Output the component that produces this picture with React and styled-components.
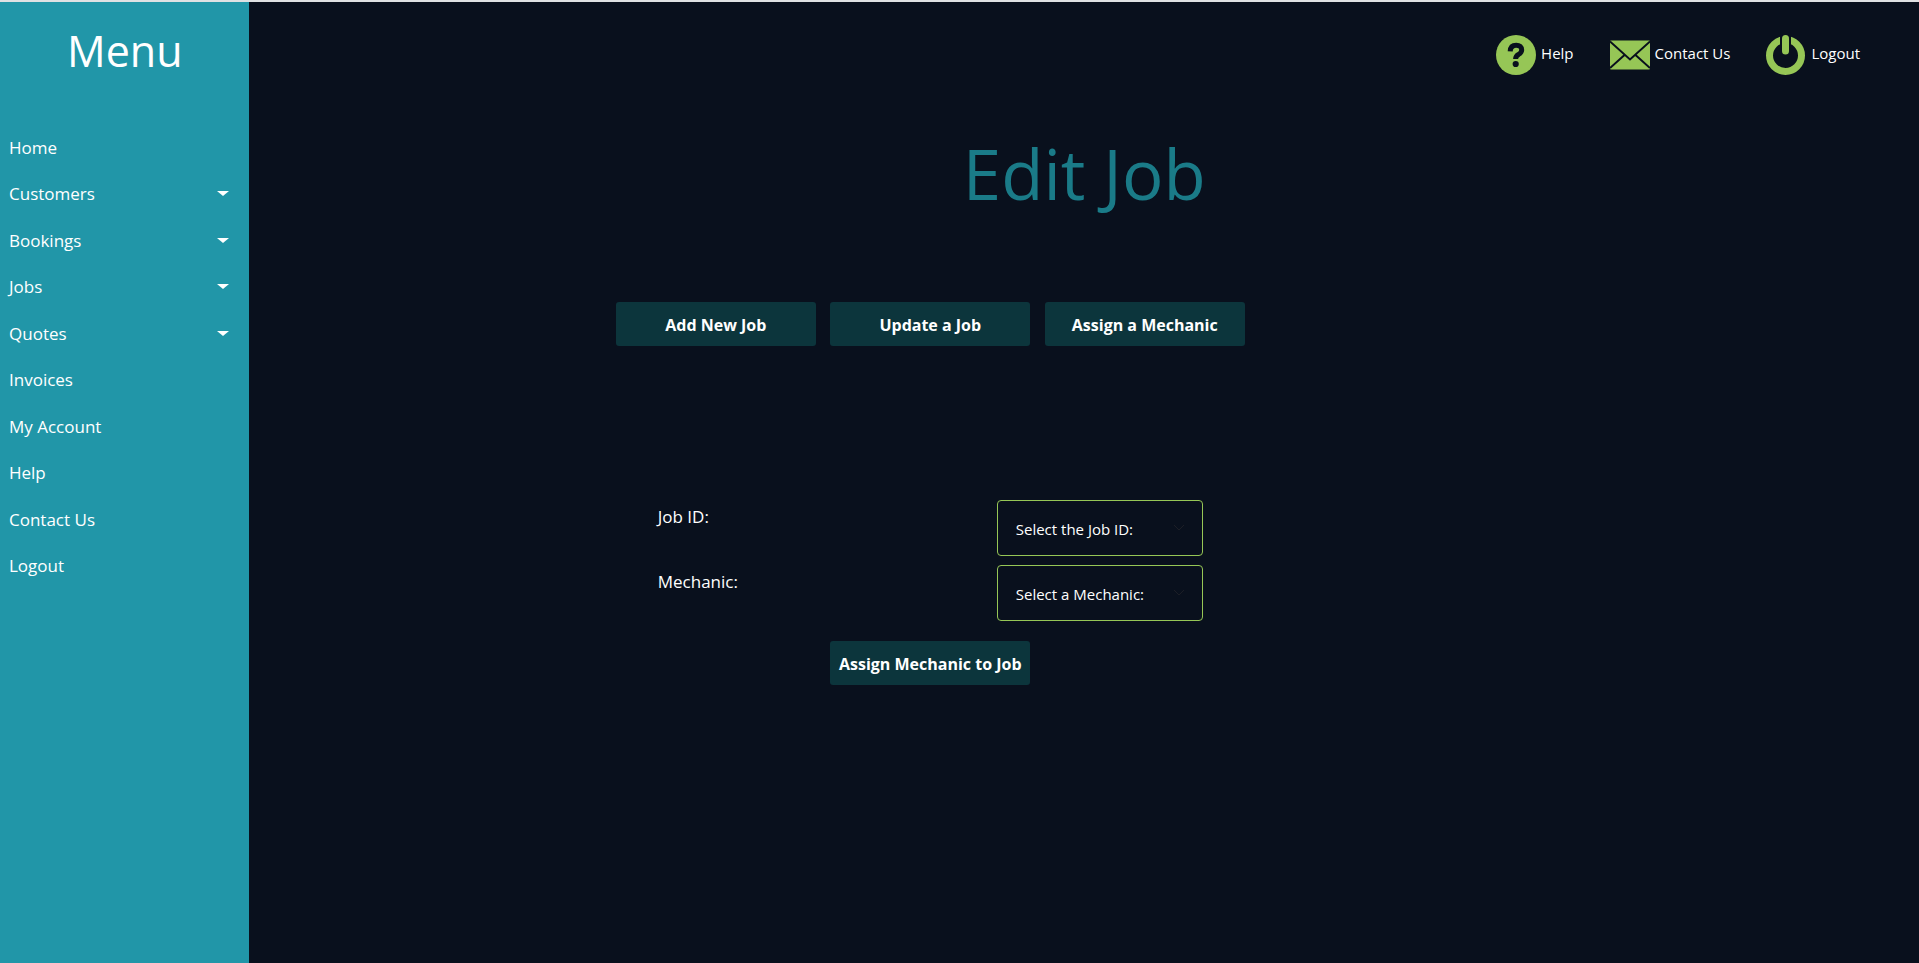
import React from "react";
import styled, { createGlobalStyle } from "styled-components";

const color = {
  page: "#09101d",
  sidebar: "#2196a8",
  title: "#1a7b88",
  button: "#0c353c",
  accent: "#96c656",
  text: "#ffffff",
};

const GlobalStyle = createGlobalStyle`
  *, *::before, *::after { box-sizing: border-box; }
  body {
    margin: 0;
    background: ${color.page};
    color: ${color.text};
    font-family: "Segoe UI", "Open Sans", "Noto Sans", sans-serif;
    font-size: 15px;
  }
  a { color: inherit; text-decoration: none; }
`;

const Page = styled.div`
  display: flex;
  min-height: 100vh;
  border-top: 2px solid #dfe1e3;
`;

const Sidebar = styled.aside`
  flex: none;
  width: 13%;
  background: ${color.sidebar};
`;

const MenuTitle = styled.h2`
  margin: 0;
  padding: 19px 0 20px;
  font-size: 43px;
  line-height: 60px;
  font-weight: 400;
  text-align: center;
`;

const MenuList = styled.ul`
  display: grid;
  grid-auto-rows: 1fr;
  height: 465px;
  margin: 23px 0 0;
  padding: 0;
  list-style: none;
`;

const MenuLink = styled.a`
  display: flex;
  align-items: center;
  justify-content: space-between;
  height: 100%;
  padding: 0 20px 0 9px;
  font-size: 17px;
`;

const Caret = styled.span`
  border: 6px solid transparent;
  border-top: 5px solid currentColor;
  border-bottom: 0;
`;

const Main = styled.main`
  flex: 1;
`;

const TopBar = styled.nav`
  display: flex;
  justify-content: flex-end;
  gap: 36px;
  padding: 33px 59px 0 0;
`;

const TopLink = styled.a`
  display: flex;
  align-items: flex-start;
  gap: 5px;
  line-height: 37px;

  svg { display: block; }
`;

const PageTitle = styled.h1`
  margin: 50px 0 0;
  font-size: 69px;
  line-height: 96px;
  font-weight: 400;
  text-align: center;
  color: ${color.title};
`;

const Workspace = styled.div`
  width: 629px;
  margin-left: calc(22% - 1px);
`;

const ButtonRow = styled.div`
  display: flex;
  justify-content: space-between;
  margin-top: 81px;
`;

const Button = styled.button`
  width: 200px;
  height: 44px;
  padding: 2px 0 0;
  border: 0;
  border-radius: 3px;
  background: ${color.button};
  color: inherit;
  font: inherit;
  font-size: 16px;
  font-weight: 700;
  cursor: pointer;
`;

const Form = styled.form`
  display: grid;
  gap: 9px;
  margin-top: 154px;
`;

const Field = styled.div`
  display: flex;
  justify-content: space-between;
  padding: 0 42px;
`;

const Label = styled.label`
  padding-top: 5px;
  font-size: 17px;
  line-height: 24px;
`;

const SelectBox = styled.div`
  position: relative;
  width: 206px;

  svg {
    position: absolute;
    top: 24px;
    right: 18px;
    pointer-events: none;
  }
`;

const Select = styled.select`
  display: block;
  width: 100%;
  height: 56px;
  padding: 1px 18px 0;
  appearance: none;
  border: 1px solid ${color.accent};
  border-radius: 4px;
  background: transparent;
  color: inherit;
  font: inherit;
`;

const Actions = styled.div`
  display: flex;
  justify-content: center;
  padding-top: 11px;
`;

const HelpIcon = () => (
  <svg width="40" height="40" viewBox="0 0 40 40" aria-hidden="true">
    <circle cx="20" cy="20" r="20" fill={color.accent} />
    <path
      d="M14.200 16.300C14.400 12 16.500 10.200 20.200 10.200c3.400 0 5.500 1.800 5.500 4.800 0 2.300-1.300 3.300-3.200 4.500-2 1.200-2.900 2-2.900 4.500"
      fill="none"
      stroke={color.page}
      strokeWidth="5"
    />
    <circle cx="19.700" cy="29" r="3.100" fill={color.page} />
  </svg>
);

const MailIcon = () => (
  <svg width="40" height="40" viewBox="0 0 40 40" aria-hidden="true">
    <rect y="5.500" width="40" height="29" rx="1" fill={color.accent} />
    <path
      d="M0 6.500L20 24.500 40 6.500M0 33L14.500 20M40 33L25.500 20"
      fill="none"
      stroke={color.page}
      strokeWidth="2"
    />
  </svg>
);

const PowerIcon = () => (
  <svg width="40" height="40" viewBox="0 0 40 40" aria-hidden="true">
    <circle cx="19.500" cy="20.500" r="16" fill="none" stroke={color.accent} strokeWidth="7" />
    <path d="M19.500 0V16" stroke={color.page} strokeWidth="11" />
    <path d="M19.500 3.500V16" stroke={color.accent} strokeWidth="7" strokeLinecap="round" />
  </svg>
);

const Chevron = () => (
  <svg width="12" height="7" viewBox="0 0 12 7" aria-hidden="true">
    <path d="M1 1l5 5 5-5" fill="none" stroke="#1c1e26" />
  </svg>
);

const menu = [
  { label: "Home" },
  { label: "Customers", expandable: true },
  { label: "Bookings", expandable: true },
  { label: "Jobs", expandable: true },
  { label: "Quotes", expandable: true },
  { label: "Invoices" },
  { label: "My Account" },
  { label: "Help" },
  { label: "Contact Us" },
  { label: "Logout" },
];

const shortcuts = [
  { label: "Help", Icon: HelpIcon },
  { label: "Contact Us", Icon: MailIcon },
  { label: "Logout", Icon: PowerIcon },
];

const fields = [
  { id: "job-id", label: "Job ID:", prompt: "Select the Job ID:" },
  { id: "mechanic", label: "Mechanic:", prompt: "Select a Mechanic:" },
];

export default function App() {
  return (
    <>
      <GlobalStyle />
      <Page>
        <Sidebar>
          <MenuTitle>Menu</MenuTitle>
          <MenuList>
            {menu.map(({ label, expandable }) => (
              <li key={label}>
                <MenuLink href="#">
                  {label}
                  {expandable && <Caret />}
                </MenuLink>
              </li>
            ))}
          </MenuList>
        </Sidebar>
        <Main>
          <TopBar>
            {shortcuts.map(({ label, Icon }) => (
              <TopLink key={label} href="#">
                <Icon />
                {label}
              </TopLink>
            ))}
          </TopBar>
          <PageTitle>Edit Job</PageTitle>
          <Workspace>
            <ButtonRow>
              <Button type="button">Add New Job</Button>
              <Button type="button">Update a Job</Button>
              <Button type="button">Assign a Mechanic</Button>
            </ButtonRow>
            <Form>
              {fields.map(({ id, label, prompt }) => (
                <Field key={id}>
                  <Label htmlFor={id}>{label}</Label>
                  <SelectBox>
                    <Select id={id}>
                      <option>{prompt}</option>
                    </Select>
                    <Chevron />
                  </SelectBox>
                </Field>
              ))}
              <Actions>
                <Button type="button">Assign Mechanic to Job</Button>
              </Actions>
            </Form>
          </Workspace>
        </Main>
      </Page>
    </>
  );
}
